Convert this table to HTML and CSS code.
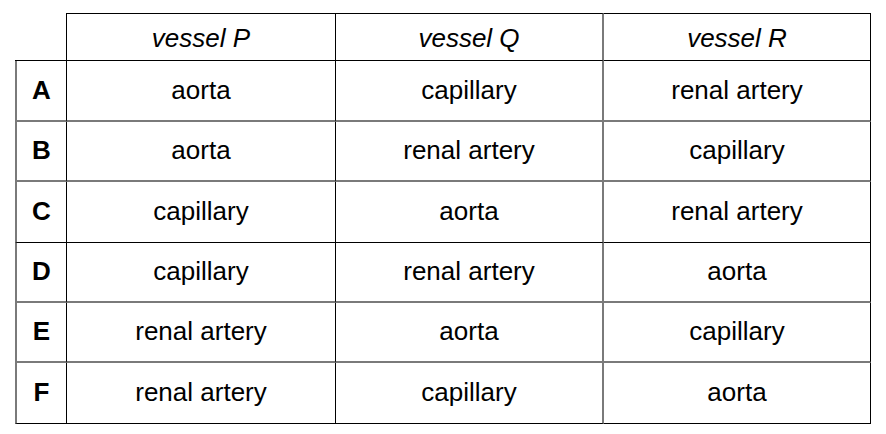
FILE: index.html
```html
<!DOCTYPE html>
<html>
<head>
<meta charset="utf-8">
<link rel="stylesheet" href="styles.css">
</head>
<body>
<div class="table">
  <div class="row head">
    <div class="corner"></div>
    <div class="hd">vessel P</div>
    <div class="hd">vessel Q</div>
    <div class="hd">vessel R</div>
  </div>
  <div class="row rg">
    <div class="lbl">A</div><div>aorta</div><div>capillary</div><div>renal artery</div>
  </div>
  <div class="row rg">
    <div class="lbl">B</div><div>aorta</div><div>renal artery</div><div>capillary</div>
  </div>
  <div class="row rk">
    <div class="lbl">C</div><div>capillary</div><div>aorta</div><div>renal artery</div>
  </div>
  <div class="row rg">
    <div class="lbl">D</div><div>capillary</div><div>renal artery</div><div>aorta</div>
  </div>
  <div class="row rg">
    <div class="lbl">E</div><div>renal artery</div><div>aorta</div><div>capillary</div>
  </div>
  <div class="row rk">
    <div class="lbl">F</div><div>renal artery</div><div>capillary</div><div>aorta</div>
  </div>
</div>
</body>
</html>
```

FILE: styles.css
```css
html, body {
  margin: 0;
  padding: 0;
  background: #fff;
}
body {
  padding: 13px 0 0 15px;
  font-family: "Liberation Sans", Arial, sans-serif;
  font-size: 26px;
  color: #000;
}
.table {
  display: grid;
  grid-template-columns: 52px 269px 268px 267px;
  grid-template-rows: 48px 61px 60px 61px 60px 60px 61px;
  width: 856px;
}
.row {
  display: contents;
}
.row > div {
  box-sizing: border-box;
  display: flex;
  align-items: center;
  justify-content: center;
  padding-bottom: 1px;
}
.row > :nth-child(1) { border-right: 1px solid #000; }
.row > :nth-child(2) { border-right: 1px solid #000; }
.row > :nth-child(3) { border-right: 2px solid #7a7a7a; }
.row > :nth-child(4) { border-right: 1px solid #000; }

.head > div { border-bottom: 1px solid #000; }
.head > .hd { border-top: 1px solid #000; font-style: italic; padding-top: 4px; }
.corner { border-top: none; }

.rg > div { border-bottom: 2px solid #7a7a7a; }
.rk > div { border-bottom: 1px solid #000; }

.lbl {
  border-left: 2px solid #7a7a7a;
  font-weight: bold;
}
```
